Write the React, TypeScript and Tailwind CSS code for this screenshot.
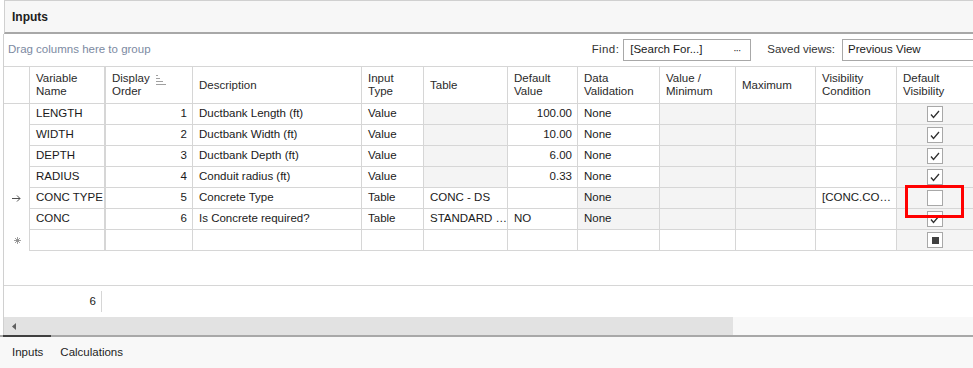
import React from "react";

const cols = [
  { w: 26 },
  { w: 76, label: ["Variable", "Name"] },
  { w: 87, label: ["Display", "Order"], sort: true },
  { w: 169, label: ["Description"] },
  { w: 62, label: ["Input", "Type"] },
  { w: 84, label: ["Table"] },
  { w: 70, label: ["Default", "Value"] },
  { w: 82, label: ["Data", "Validation"] },
  { w: 76, label: ["Value /", "Minimum"] },
  { w: 80, label: ["Maximum"] },
  { w: 81, label: ["Visibility", "Condition"] },
  { w: 77, label: ["Default", "Visibility"] },
];

type Row = {
  ind?: "arrow" | "star";
  name: string;
  order: string;
  desc: string;
  type: string;
  table: string;
  tableGray: boolean;
  def: string;
  defRight: boolean;
  dv: string;
  dvGray: boolean;
  vis: string;
  check: "on" | "off" | "ind";
};

const rows: Row[] = [
  { name: "LENGTH", order: "1", desc: "Ductbank Length (ft)", type: "Value", table: "", tableGray: true, def: "100.00", defRight: true, dv: "None", dvGray: false, vis: "", check: "on" },
  { name: "WIDTH", order: "2", desc: "Ductbank Width (ft)", type: "Value", table: "", tableGray: true, def: "10.00", defRight: true, dv: "None", dvGray: false, vis: "", check: "on" },
  { name: "DEPTH", order: "3", desc: "Ductbank Depth (ft)", type: "Value", table: "", tableGray: true, def: "6.00", defRight: true, dv: "None", dvGray: false, vis: "", check: "on" },
  { name: "RADIUS", order: "4", desc: "Conduit radius (ft)", type: "Value", table: "", tableGray: true, def: "0.33", defRight: true, dv: "None", dvGray: false, vis: "", check: "on" },
  { ind: "arrow", name: "CONC TYPE", order: "5", desc: "Concrete Type", type: "Table", table: "CONC - DS", tableGray: false, def: "", defRight: false, dv: "None", dvGray: true, vis: "[CONC.CO…", check: "off" },
  { name: "CONC", order: "6", desc: "Is Concrete required?", type: "Table", table: "STANDARD …", tableGray: false, def: "NO", defRight: false, dv: "None", dvGray: true, vis: "", check: "on" },
  { ind: "star", name: "", order: "", desc: "", type: "", table: "", tableGray: false, def: "", defRight: false, dv: "", dvGray: false, vis: "", check: "ind" },
];

function SortIcon() {
  return (
    <svg width="10" height="10" viewBox="0 0 10 10" className="ml-[6px] mt-[3px]">
      <rect x="0" y="0" width="2" height="1" fill="#a0a0a0" />
      <rect x="0" y="3" width="4" height="1" fill="#a0a0a0" />
      <rect x="0" y="6" width="7" height="1" fill="#a0a0a0" />
      <rect x="0" y="9" width="10" height="1" fill="#a0a0a0" />
    </svg>
  );
}

function Check({ state }: { state: "on" | "off" | "ind" }) {
  return (
    <div className="w-[16px] h-[16px] border border-[#a8a8a8] bg-white flex items-center justify-center">
      {state === "on" && (
        <svg width="10" height="9" viewBox="0 0 10 9">
          <path d="M1 4.5 L3.5 7.5 L9 1" stroke="#303030" strokeWidth="1.3" fill="none" />
        </svg>
      )}
      {state === "ind" && <div className="w-[7px] h-[7px] bg-[#404040]" />}
    </div>
  );
}

function Cell({
  w,
  gray,
  right,
  thick,
  children,
}: {
  w: number;
  gray?: boolean;
  right?: boolean;
  thick?: boolean;
  children?: React.ReactNode;
}) {
  return (
    <div
      style={{ width: w }}
      className={`h-full shrink-0 box-border flex items-center overflow-hidden whitespace-nowrap border-b border-[#d6d6d6] ${
        thick ? "border-r-2" : "border-r"
      } border-r-[#d6d6d6] ${gray ? "bg-[#f4f4f4]" : "bg-white"} ${right ? "justify-end pr-[5px]" : "pl-[6px]"}`}
    >
      {children}
    </div>
  );
}

export default function App() {
  return (
    <div
      className="w-[973px] h-[368px] bg-white text-[11.5px] text-[#1a1a1a] overflow-hidden flex flex-col"
      style={{ fontFamily: "Tahoma, 'Liberation Sans', Arial, sans-serif" }}
    >
      {/* title */}
      <div className="ml-[4px] h-[34px] shrink-0 bg-[#f7f7f7] border-t border-l border-[#d0d0d0] border-b-2 border-b-[#a8a8a8] flex items-center pl-[7px]">
        <span className="font-bold text-[12px] text-[#202020]">Inputs</span>
      </div>

      <div className="ml-[3px] flex-1 flex flex-col border-l border-[#d0d0d0] min-h-0">
        {/* group panel */}
        <div className="h-[33px] shrink-0 flex items-center border-b border-[#d6d6d6]">
          <span className="pl-[4px] text-[#7c8aa2]">Drag columns here to group</span>
          <div className="flex-1" />
          <span className="text-[#333] mr-[4px] tracking-[0.4px]">Find:</span>
          <div className="w-[128px] h-[22px] border border-[#a8a8a8] flex items-center pl-[6px] pr-[6px] mr-[16px]">
            <span>[Search For...]</span>
            <div className="flex-1" />
            <span className="text-[10px] tracking-[-1px] pr-[4px]">···</span>
          </div>
          <span className="text-[#333] mr-[7px]">Saved views:</span>
          <div className="w-[131px] h-[22px] border border-[#a8a8a8] border-r-0 flex items-center pl-[5px]">
            <span>Previous View</span>
          </div>
        </div>

        {/* header */}
        <div className="h-[37px] shrink-0 flex">
          {cols.map((c, i) => (
            <div
              key={i}
              style={{ width: c.w }}
              className={`h-full shrink-0 box-border flex items-center border-b border-[#d6d6d6] ${
                i === 1 ? "border-r-2" : "border-r"
              } border-r-[#d6d6d6] pl-[6px] text-[#2a2a2a]`}
            >
              {c.label && (
                <div className="flex items-start leading-[13px]">
                  <div>
                    {c.label.map((l, j) => (
                      <div key={j}>{l}</div>
                    ))}
                  </div>
                  {c.sort && <SortIcon />}
                </div>
              )}
            </div>
          ))}
        </div>

        {/* rows */}
        {rows.map((r, i) => (
          <div key={i} className="h-[21px] shrink-0 flex">
            <div
              style={{ width: 26 }}
              className="h-full shrink-0 box-border border-r border-[#d6d6d6] flex items-center pl-[8px]"
            >
              {r.ind === "arrow" && (
                <svg width="9" height="7" viewBox="0 0 9 7">
                  <path d="M0 3.5 H8 M5 0.5 L8 3.5 L5 6.5" stroke="#505050" strokeWidth="1" fill="none" />
                </svg>
              )}
              {r.ind === "star" && (
                <svg width="9" height="9" viewBox="0 0 9 9" className="ml-[1px]">
                  <path d="M4.5 1 V8 M1 4.5 H8 M2 2 L7 7 M7 2 L2 7" stroke="#a0a0a0" strokeWidth="1" fill="none" />
                  <circle cx="4.5" cy="4.5" r="1.5" fill="#909090" />
                </svg>
              )}
            </div>
            <Cell w={76} thick>
              {r.name}
            </Cell>
            <Cell w={87} right>
              {r.order}
            </Cell>
            <Cell w={169}>{r.desc}</Cell>
            <Cell w={62}>{r.type}</Cell>
            <Cell w={84} gray={r.tableGray}>
              {r.table}
            </Cell>
            <Cell w={70} right={r.defRight}>
              {r.def}
            </Cell>
            <Cell w={82} gray={r.dvGray}>
              {r.dv}
            </Cell>
            <Cell w={76} gray={i < 6}></Cell>
            <Cell w={80} gray={i < 6}></Cell>
            <Cell w={81}>{r.vis}</Cell>
            <div className="relative w-[77px] h-full shrink-0 box-border border-b border-[#d6d6d6] bg-[#f4f4f4] flex items-center justify-center pr-[1px]">
              <Check state={r.check} />
              {i === 4 && (
                <div className="absolute left-[8px] top-[-3px] w-[59px] h-[33px] border-[3px] border-[#ff0000] z-10" />
              )}
            </div>
          </div>
        ))}

        <div className="flex-1" />

        {/* footer */}
        <div className="h-[32px] shrink-0 border-t border-[#d6d6d6] flex items-center">
          <div className="w-[98px] h-[21px] border-r border-[#d6d6d6] flex items-center justify-end pr-[5px]">
            6
          </div>
        </div>

        {/* scrollbar */}
        <div className="h-[18px] shrink-0 flex">
          <div className="w-[729px] h-full bg-[#e2e2e2] flex items-center pl-[8px]">
            <svg width="4" height="7" viewBox="0 0 4 7">
              <path d="M4 0 L0 3.5 L4 7 Z" fill="#606060" />
            </svg>
          </div>
          <div className="flex-1 bg-[#f8f8f8]" />
        </div>
      </div>

      {/* tabs */}
      <div className="h-[33px] shrink-0 bg-[#f8f8f8] border-t-2 border-[#a8a8a8] relative flex items-center">
        <div className="absolute left-[3px] top-[-2px] w-[48px] h-[2px] bg-[#404040]" />
        <span className="ml-[12px] text-[#1e1e1e]">Inputs</span>
        <span className="ml-[17px] text-[#1e1e1e]">Calculations</span>
      </div>
    </div>
  );
}
